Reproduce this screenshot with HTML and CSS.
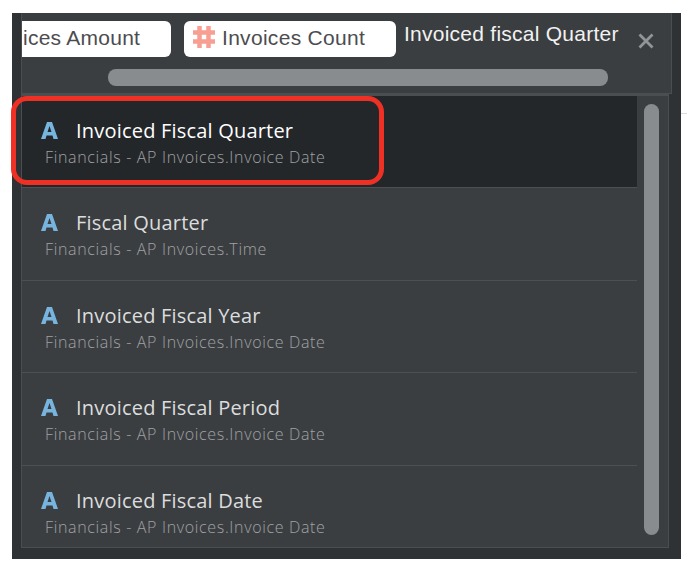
FILE: index.html
```html
<!DOCTYPE html>
<html lang="en">
<head>
<meta charset="utf-8">
<title>Search</title>
<link rel="stylesheet" href="styles.css">
</head>
<body>
<svg width="0" height="0" class="defs" aria-hidden="true">
  <symbol id="attr" viewBox="0 0 17 17"><path fill-rule="evenodd" d="M0 17 6 0h5l6 17h-4.500l-1-3.500h-6l-1 3.500zM6.500 10h4L8.500 4z"/></symbol>
</svg>
<main class="panel">
  <header class="search">
    <div class="search-row">
      <div class="chip chip-cut"><span>ices Amount</span></div>
      <div class="chip">
        <svg class="hash" viewBox="0 0 22 22"><path d="M6.500 0v22M15.500 0v22M0 6.500h22M0 15.500h22"/></svg>
        <span>Invoices Count</span>
      </div>
      <span class="query">Invoiced fiscal Quarter</span>
      <svg class="close" viewBox="0 0 16 16"><path d="M1.500 1.500l13 13M14.500 1.500l-13 13"/></svg>
    </div>
    <div class="hbar"></div>
  </header>
  <section class="results">
    <ul class="list">
      <li class="item selected"><svg class="icon"><use href="#attr"/></svg><span class="title">Invoiced Fiscal Quarter</span><span class="path">Financials - AP Invoices.Invoice Date</span></li>
      <li class="item"><svg class="icon"><use href="#attr"/></svg><span class="title">Fiscal Quarter</span><span class="path">Financials - AP Invoices.Time</span></li>
      <li class="item"><svg class="icon"><use href="#attr"/></svg><span class="title">Invoiced Fiscal Year</span><span class="path">Financials - AP Invoices.Invoice Date</span></li>
      <li class="item"><svg class="icon"><use href="#attr"/></svg><span class="title">Invoiced Fiscal Period</span><span class="path">Financials - AP Invoices.Invoice Date</span></li>
      <li class="item"><svg class="icon"><use href="#attr"/></svg><span class="title">Invoiced Fiscal Date</span><span class="path">Financials - AP Invoices.Invoice Date</span></li>
    </ul>
    <div class="vbar"></div>
  </section>
  <div class="highlight"></div>
</main>
<div class="rule"></div>
</body>
</html>
```
FILE: styles.css
```css
* { box-sizing: border-box; }
body { margin: 0; background: #fff; height: 582px; overflow: hidden; display: flex; align-items: flex-start; padding: 13px 0 0 12px; }
.defs { position: absolute; }
.panel { position: relative; width: 669px; height: 546px; background: #2e3235; padding: 0 9px; font-family: "Open Sans", "Noto Sans", sans-serif; }
.search { width: 651px; height: 81px; background: #3b3e41; border: 1px solid #4b4e51; border-top-color: #3b3e41; }
.search-row { display: flex; height: 55px; padding-top: 7px; align-items: flex-start; }
.chip { display: flex; align-items: center; width: 212px; height: 36px; flex: none; background: #fff; border-radius: 6px; padding-left: 9px; margin-right: 8px; font: 21px "Liberation Sans", sans-serif; letter-spacing: .3px; color: #4c4c50; white-space: nowrap; }
.chip-cut { width: 149px; padding-left: 1px; margin-right: 13px; border-radius: 0 6px 6px 0; letter-spacing: .25px; }
.hash { width: 22px; height: 22px; margin: -4px 7px 0 0; fill: none; stroke: #f79f92; stroke-width: 4.500; }
.chip span { margin-top: -2px; }
.query { font: 21px/26px "Liberation Sans", sans-serif; letter-spacing: .25px; color: #f2f2f2; white-space: nowrap; width: 217px; flex: none; }
.close { width: 16px; height: 16px; margin: 12px 0 0 17px; flex: none; fill: none; stroke: #929597; stroke-width: 2.800; }
.hbar { width: 500px; height: 17px; margin-left: 86px; border-radius: 8px; background: #898c8e; }
.results { display: flex; width: 648px; height: 454px; background: #3b3e41; border: 1px solid #4b4e51; border-top-width: 2px; }
.list { list-style: none; margin: 0; padding: 0; width: 615px; }
.item { height: 92.400px; border-bottom: 1px solid #4d5052; display: grid; grid-template-columns: 17px auto; column-gap: 18px; grid-template-rows: 27px 26px; padding: 21px 0 0 19px; align-content: start; align-items: center; }
.item:last-child { height: 80px; border: 0; }
.selected { background: #24272a; }
.icon { width: 17px; height: 17px; fill: #77b5df; }
.title { font-size: 20px; line-height: 27px; letter-spacing: .2px; color: #dcdddd; white-space: nowrap; }
.selected .title { color: #fff; }
.path { grid-column: 1 / 3; margin-left: 4px; font-size: 16px; line-height: 26px; letter-spacing: .66px; font-weight: 300; color: #a0a2a4; white-space: nowrap; }
.vbar { width: 15px; height: 431px; margin: 8px 0 0 7px; border-radius: 8px; background: #898c8e; }
.highlight { position: absolute; left: -1px; top: 83px; width: 373px; height: 89px; border: 5px solid #ee3124; border-radius: 16px; }
.rule { width: 6px; height: 1px; margin-top: 100px; background: #ddd; }
```
